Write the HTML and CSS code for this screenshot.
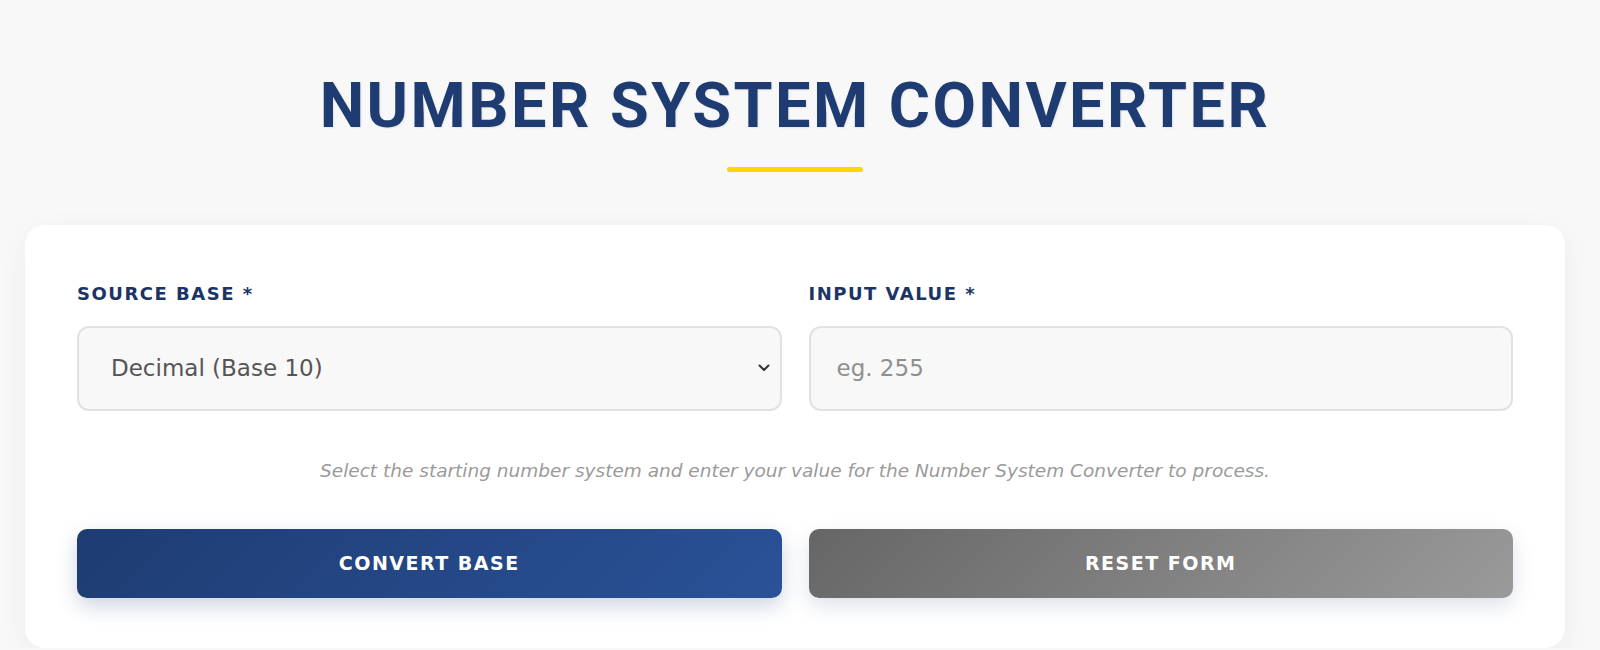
FILE: index.html
```html
<!DOCTYPE html>
<html lang="en">
<head>
<meta charset="utf-8">
<title>Number System Converter</title>
<link rel="stylesheet" href="styles.css">
</head>
<body>
<div class="page">
  <h1 class="title">NUMBER SYSTEM CONVERTER</h1>
  <div class="title-bar"></div>
  <div class="card">
    <div class="row">
      <div class="field">
        <label class="label" for="base">SOURCE BASE *</label>
        <div class="select-wrap">
          <select id="base" class="control select">
            <option>Decimal (Base 10)</option>
            <option>Binary (Base 2)</option>
            <option>Octal (Base 8)</option>
            <option>Hexadecimal (Base 16)</option>
          </select>
          <svg class="chevron" width="12" height="8" viewBox="0 0 12 8" aria-hidden="true"><path d="M1.5 1.5 L6 6 L10.5 1.5" fill="none" stroke="#333" stroke-width="2" stroke-linecap="round" stroke-linejoin="round"/></svg>
        </div>
      </div>
      <div class="field">
        <label class="label" for="val">INPUT VALUE *</label>
        <input id="val" class="control input" type="text" placeholder="eg. 255">
      </div>
    </div>
    <p class="hint">Select the starting number system and enter your value for the Number System Converter to process.</p>
    <div class="row">
      <button class="btn btn-primary" type="button">CONVERT BASE</button>
      <button class="btn btn-secondary" type="button">RESET FORM</button>
    </div>
  </div>
</div>
</body>
</html>
```

FILE: styles.css
```css
* { box-sizing: border-box; }
html, body { margin: 0; padding: 0; }
body {
  background: #f8f8f9;
  font-family: "DejaVu Sans", Inter, sans-serif;
  overflow: hidden;
}
.page {
  width: 1540px;
  margin-left: 25px;
}
.title {
  margin: 68px 0 0;
  text-align: center;
  font-family: Roboto, Inter, sans-serif;
  font-size: 63px;
  line-height: 76px;
  font-weight: 700;
  letter-spacing: 2.5px;
  color: #1e3c72;
  text-shadow: 1px 1px 2px rgba(0, 0, 0, 0.08);
}
.title-bar {
  width: 136px;
  height: 5px;
  margin: 23px auto 0;
  background: #ffd700;
  border-radius: 3px;
}
.card {
  margin-top: 53px;
  background: #ffffff;
  border-radius: 20px;
  padding: 56px 52px 50px;
  box-shadow: 0 8px 30px rgba(0, 0, 0, 0.05);
}
.row {
  display: grid;
  grid-template-columns: 1fr 1fr;
  column-gap: 27px;
}
.label {
  display: block;
  font-size: 18px;
  line-height: 25.5px;
  font-weight: 700;
  letter-spacing: 1.5px;
  color: #1b3466;
  margin-bottom: 19px;
}
.select-wrap {
  position: relative;
}
.control {
  display: block;
  width: 100%;
  height: 85px;
  border: 2px solid #e2e2e2;
  border-radius: 12px;
  background: #f8f8f8;
  padding: 0 32px;
  font-family: "DejaVu Sans", Inter, sans-serif;
  font-size: 23px;
  color: #555555;
  outline: none;
}
.select {
  appearance: none;
  -webkit-appearance: none;
}
.input {
  padding-left: 26px;
}
.input::placeholder {
  color: #8f8f8f;
}
.chevron {
  position: absolute;
  right: 12px;
  top: 38px;
}
.hint {
  margin: 48px 0 46px;
  text-align: center;
  font-style: italic;
  font-size: 18.5px;
  line-height: 24px;
  color: #9a9a9a;
}
.btn {
  height: 69px;
  border: 0;
  border-radius: 10px;
  font-family: "DejaVu Sans", Inter, sans-serif;
  font-size: 19px;
  font-weight: 700;
  letter-spacing: 1.5px;
  color: #ffffff;
  cursor: pointer;
}
.btn-primary {
  background: linear-gradient(135deg, #1e3c72 0%, #2a5298 100%);
  box-shadow: 0 8px 20px rgba(30, 60, 114, 0.22);
}
.btn-secondary {
  background: linear-gradient(135deg, #666666 0%, #9a9a9a 100%);
  box-shadow: 0 8px 20px rgba(30, 60, 114, 0.15);
}
```
